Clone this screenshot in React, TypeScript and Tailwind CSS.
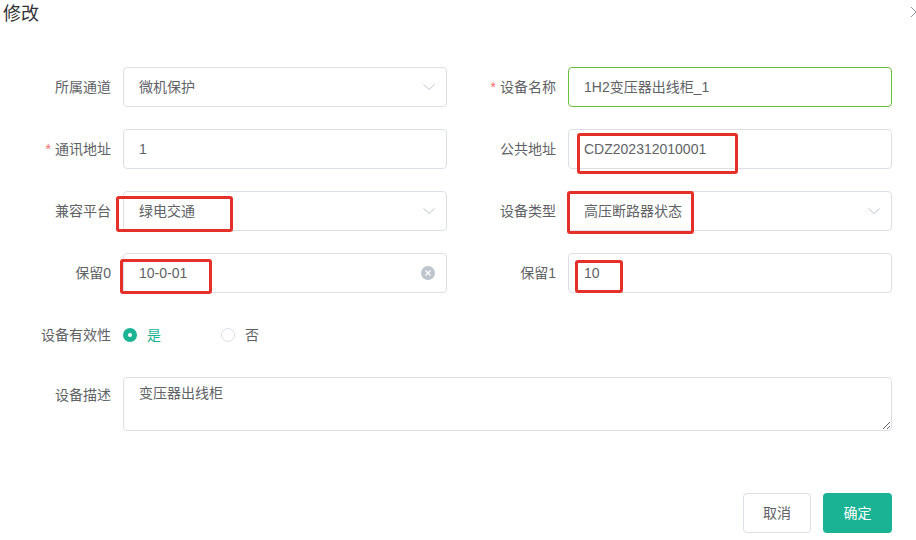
import React from 'react';

const font = { fontFamily: '"Liberation Sans", "Noto Sans CJK SC", sans-serif' };

const Chevron = () => (
  <svg width="14" height="14" viewBox="0 0 14 14" className="shrink-0">
    <path d="M1.5 4.5 L7 9.5 L12.5 4.5" fill="none" stroke="#c0c4cc" strokeWidth="1" />
  </svg>
);

const Mark = ({ className }: { className: string }) => (
  <div className={`absolute border-[3px] border-[#e5302a] rounded-[3px] pointer-events-none ${className}`} />
);

const Label = ({ text, required }: { text: string; required?: boolean }) => (
  <div className="w-[100px] shrink-0 pr-3 text-right text-[14px] text-[#606266] leading-[40px]">
    {required && <span className="text-[#f56c6c] mr-1">*</span>}
    {text}
  </div>
);

const Field = ({
  label,
  required,
  value,
  select,
  clear,
  focus,
  mark,
}: {
  label: string;
  required?: boolean;
  value: string;
  select?: boolean;
  clear?: boolean;
  focus?: boolean;
  mark?: string;
}) => (
  <div className="flex items-center">
    <Label text={label} required={required} />
    <div
      className={`relative flex-1 h-[40px] flex items-center pl-[15px] pr-[10px] rounded-[4px] border bg-white ${
        focus ? 'border-[#67c23a]' : 'border-[#dcdfe6]'
      }`}
    >
      <span className="flex-1 text-[14px] text-[#606266]">{value}</span>
      {select && <Chevron />}
      {clear && (
        <span className="w-[14px] h-[14px] mr-[1px] rounded-full bg-[#c0c4cc] flex items-center justify-center">
          <svg width="8" height="8" viewBox="0 0 8 8">
            <path d="M1.5 1.5 L6.5 6.5 M6.5 1.5 L1.5 6.5" stroke="#fff" strokeWidth="1.2" />
          </svg>
        </span>
      )}
      {mark && <Mark className={mark} />}
    </div>
  </div>
);

export default function App() {
  return (
    <div className="relative w-[916px] h-[540px] bg-white overflow-hidden" style={font}>
      <div className="flex items-center justify-between">
        <h1 className="pl-[3px] pt-[2px] text-[18px] leading-[24px] text-[#303133]">修改</h1>
      </div>
      <button className="absolute right-[-6px] top-[6px] w-[12px] h-[12px]">
        <svg width="12" height="12" viewBox="0 0 12 12">
          <path d="M1 1 L11 11 M11 1 L1 11" stroke="#909399" strokeWidth="1" />
        </svg>
      </button>

      <div className="mt-[41px] pl-[23px] pr-[24px] grid grid-cols-2 gap-x-[21px] gap-y-[22px]">
        <Field label="所属通道" value="微机保护" select />
        <Field label="设备名称" required value="1H2变压器出线柜_1" focus />
        <Field label="通讯地址" required value="1" />
        <Field label="公共地址" value="CDZ202312010001" mark="left-[8px] top-[3px] w-[161px] h-[41px]" />
        <Field label="兼容平台" value="绿电交通" select mark="left-[-8px] top-[4px] w-[117px] h-[36px]" />
        <Field label="设备类型" value="高压断路器状态" select mark="left-[-2px] top-[-1px] w-[127px] h-[43px]" />
        <Field label="保留0" value="10-0-01" clear mark="left-[-4px] top-[5px] w-[92px] h-[35px]" />
        <Field label="保留1" value="10" mark="left-[6px] top-[6px] w-[48px] h-[33px]" />

        <div className="col-span-2 flex items-center">
          <Label text="设备有效性" />
          <div className="flex items-center text-[14px]">
            <label className="w-[98px] flex items-center">
              <span className="w-[14px] h-[14px] rounded-full bg-[#1ab394] flex items-center justify-center">
                <span className="w-[4px] h-[4px] rounded-full bg-white" />
              </span>
              <span className="ml-[10px] text-[#1ab394]">是</span>
            </label>
            <label className="flex items-center">
              <span className="w-[14px] h-[14px] rounded-full border border-[#dcdfe6] bg-white" />
              <span className="ml-[10px] text-[#606266]">否</span>
            </label>
          </div>
        </div>

        <div className="col-span-2 flex items-start">
          <div className="w-[100px] shrink-0 pr-3 pt-[6px] text-right text-[14px] text-[#606266] leading-[24px]">
            设备描述
          </div>
          <textarea
            readOnly
            value="变压器出线柜"
            className="flex-1 h-[54px] px-[15px] py-[5px] text-[14px] leading-[21px] text-[#606266] border border-[#dcdfe6] rounded-[4px] outline-none resize-y"
            style={font}
          />
        </div>
      </div>

      <div className="mt-[62px] pr-[24px] flex justify-end gap-[12px]">
        <button className="w-[68px] h-[40px] rounded-[4px] border border-[#dcdfe6] bg-white text-[14px] text-[#606266]">
          取消
        </button>
        <button className="w-[69px] h-[40px] rounded-[4px] bg-[#1ab394] text-[14px] text-white">
          确定
        </button>
      </div>
    </div>
  );
}
